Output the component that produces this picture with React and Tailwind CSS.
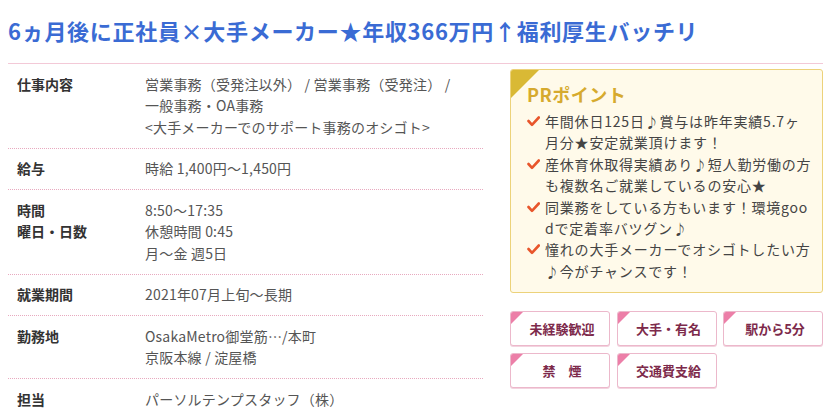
import React from "react";

const rows = [
  { label: ["仕事内容"], value: ["営業事務（受発注以外） / 営業事務（受発注） /", "一般事務・OA事務", "<大手メーカーでのサポート事務のオシゴト>"] },
  { label: ["給与"], value: ["時給 1,400円〜1,450円"] },
  { label: ["時間", "曜日・日数"], value: ["8:50〜17:35", "休憩時間 0:45", "月〜金 週5日"] },
  { label: ["就業期間"], value: ["2021年07月上旬〜長期"] },
  { label: ["勤務地"], value: ["OsakaMetro御堂筋…/本町", "京阪本線 / 淀屋橋"] },
  { label: ["担当"], value: ["パーソルテンプスタッフ（株）"] },
];

const points = [
  ["年間休日125日♪賞与は昨年実績5.7ヶ", "月分★安定就業頂けます！"],
  ["産休育休取得実績あり♪短人勤労働の方", "も複数名ご就業しているの安心★"],
  ["同業務をしている方もいます！環境goo", "dで定着率バツグン♪"],
  ["憧れの大手メーカーでオシゴトしたい方", "♪今がチャンスです！"],
];

const tags = ["未経験歓迎", "大手・有名", "駅から5分", "禁　煙", "交通費支給"];

function Check() {
  return (
    <svg width="13" height="11" viewBox="0 0 13 11" className="mt-[5px] shrink-0">
      <path d="M1.5 5 L5 8.8 L11.8 1.5" fill="none" stroke="#e8552b" strokeWidth="2.6" strokeLinecap="round" strokeLinejoin="round" />
    </svg>
  );
}

export default function App() {
  return (
    <div
      className="w-[835px] h-[418px] overflow-hidden bg-white [text-spacing-trim:space-all]"
      style={{ fontFamily: '"Noto Sans CJK JP", "Liberation Sans", sans-serif' }}
    >
      <h1 className="pl-[8px] pt-[16px] h-[63px] text-[22px] leading-[28px] font-bold tracking-[0.7px] text-[#3a6bd4] whitespace-nowrap">
        6ヵ月後に正社員×大手メーカー★年収366万円↑福利厚生バッチリ
      </h1>
      <div className="ml-[8px] w-[815px] border-t border-[#f3c9d7] flex gap-[27px]">
        <div className="w-[475px]">
          {rows.map((r, i) => (
            <div
              key={i}
              className={`flex py-[9.5px] text-[14px] leading-[21.5px] ${i < rows.length - 1 ? "border-b border-dotted border-[#e8a9bf]" : ""}`}
            >
              <div className="w-[137px] pl-[9px] font-bold text-[#333]">
                {r.label.map((l, j) => (
                  <div key={j}>{l}</div>
                ))}
              </div>
              <div className="text-[#555] tracking-[0.2px]">
                {r.value.map((v, j) => (
                  <div key={j} className="whitespace-nowrap">{v}</div>
                ))}
              </div>
            </div>
          ))}
        </div>
        <div className="w-[313px] pt-[5px]">
          <div className="relative overflow-hidden rounded-[3px] border border-[#ecd27a] bg-[#fffaea] pl-[16px] pr-[8px] pt-[13px] pb-[10px]">
            <div className="absolute left-0 top-0 w-0 h-0 border-t-[28px] border-r-[28px] border-t-[#d9b935] border-r-transparent" />
            <div className="relative text-[18px] leading-[22px] font-bold tracking-[0.5px] text-[#d6aa2e] mb-[6px]">PRポイント</div>
            <ul className="text-[14px] leading-[21.4px] text-[#444] tracking-[0.8px]">
              {points.map((p, i) => (
                <li key={i} className="flex gap-[5px]">
                  <Check />
                  <div>
                    {p.map((l, j) => (
                      <div key={j} className="whitespace-nowrap">{l}</div>
                    ))}
                  </div>
                </li>
              ))}
            </ul>
          </div>
          <div className="mt-[18px] grid grid-cols-3 gap-x-[6.5px] gap-y-[7px]">
            {tags.map((t, i) => (
              <div
                key={i}
                className="relative overflow-hidden h-[35px] rounded-[3px] border border-[#ecb8cb] shadow-[0_1px_0_#f3d3df] bg-white flex items-center justify-center text-[13px] font-bold text-[#7d2a4b]"
              >
                <div className="absolute left-0 top-0 w-0 h-0 border-t-[12px] border-r-[12px] border-t-[#ec7fa8] border-r-transparent" />
                <span className="pl-[4px]">{t}</span>
              </div>
            ))}
          </div>
        </div>
      </div>
    </div>
  );
}
